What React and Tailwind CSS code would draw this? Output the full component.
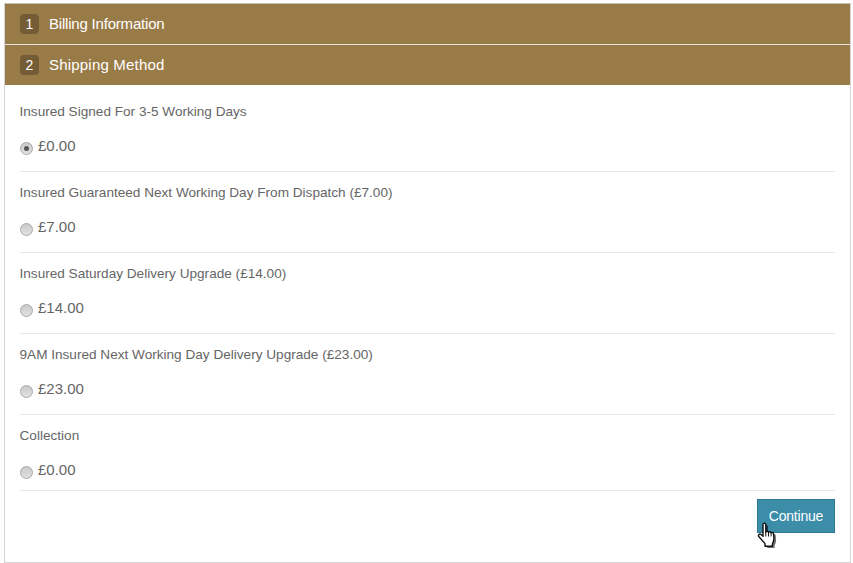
const methods = [
    { name: "Insured Signed For 3-5 Working Days", price: "£0.00", checked: true },
    { name: "Insured Guaranteed Next Working Day From Dispatch (£7.00)", price: "£7.00" },
    { name: "Insured Saturday Delivery Upgrade (£14.00)", price: "£14.00" },
    { name: "9AM Insured Next Working Day Delivery Upgrade (£23.00)", price: "£23.00" },
    { name: "Collection", price: "£0.00" },
];

const Heading = ({ number, title, className }) => (
    <div className={`bg-[#997b48] flex items-center pl-[15px] gap-[10px] text-white text-[15px] ${className}`}>
        <span className="w-[19px] h-[20px] rounded-[4px] bg-[#735c36] flex items-center justify-center text-[14px] tracking-normal">{number}</span>
        <span>{title}</span>
    </div>
);

const Radio = ({ checked }) => (
    <span className="w-[13px] h-[13px] mt-[2px] rounded-full border border-[#a8a8a8] bg-gradient-to-b from-[#c9c9c9] to-[#e2e2e2] flex items-center justify-center">
        {checked && <span className="w-[5px] h-[5px] rounded-full bg-[#555555]"></span>}
    </span>
);

const App = () => {
    return (
        <div className="w-[853px] h-[563px] bg-white pt-[3px] pl-[4px] pr-[2px] text-[#666666] font-['Liberation_Sans',sans-serif] text-[13.6px] overflow-hidden">
            <div className="h-[560px] border border-t-0 border-[#d5d5d5]">
                <Heading number="1" title="Billing Information" className="h-[41px] border-t border-[#c9c0ad] tracking-[-0.2px]" />
                <div className="h-px bg-[#e6e2da]"></div>
                <Heading number="2" title="Shipping Method" className="h-[40px] tracking-[0.2px]" />
                <div className="px-[15px]">
                    {methods.map((method, i) => (
                        <div
                            key={method.name}
                            className={`border-b border-[#e6e6e6] ${i === 0 ? "h-[87px] pt-[18px]" : i === methods.length - 1 ? "h-[76px] pt-[12px]" : "h-[81px] pt-[12px]"}`}
                        >
                            <p className="leading-[18px] -ml-[0.5px]">{method.name}</p>
                            <div className="flex items-center gap-[5px] mt-[16px] leading-[18px]">
                                <Radio checked={method.checked} />
                                <span className="text-[15px] pb-[2px]">{method.price}</span>
                            </div>
                        </div>
                    ))}
                    <div className="flex justify-end pt-[8px]">
                        <div className="relative">
                            <button className="w-[78px] h-[34px] bg-[#3b8da8] border border-[#2f7a92] text-white text-[14px] tracking-[-0.2px]">Continue</button>
                            <svg className="absolute left-0 top-[23px]" width="21" height="27" viewBox="0 0 21 27">
                                <path d="M7.5 2.5c1-.8 2.3 0 2.3 1.2V11c.4-1 2.4-1 2.7.3.5-.9 2.3-.7 2.6.5.6-.7 2.3-.4 2.5 1l.3 5c0 2.2-.8 3.6-1.5 5v2.4H9v-2.6L2.8 15.5c-1-1.4.8-3.2 2.2-2l2 1.8V3.8c0-.5.1-1 .5-1.3z" fill="#000000" opacity="0.55" transform="translate(1.2 .8)" />
                                <path d="M6.5 1.5c1-.8 2.3 0 2.3 1.2V10c.4-1 2.4-1 2.7.3.5-.9 2.3-.7 2.6.5.6-.7 2.3-.4 2.5 1l.3 5c0 2.2-.8 3.6-1.5 5v2.4H8v-2.6L1.8 14.5c-1-1.4.8-3.2 2.2-2l2 1.8V2.8c0-.5.1-1 .5-1.3z" fill="#ffffff" stroke="#111111" strokeWidth="1.4" strokeLinejoin="round" />
                                <path d="M8.8 10v4.5M11.5 10.5v4M14.1 11v3.5" stroke="#111111" strokeWidth="1" fill="none" />
                            </svg>
                        </div>
                    </div>
                </div>
            </div>
        </div>
    )
}

export default App
